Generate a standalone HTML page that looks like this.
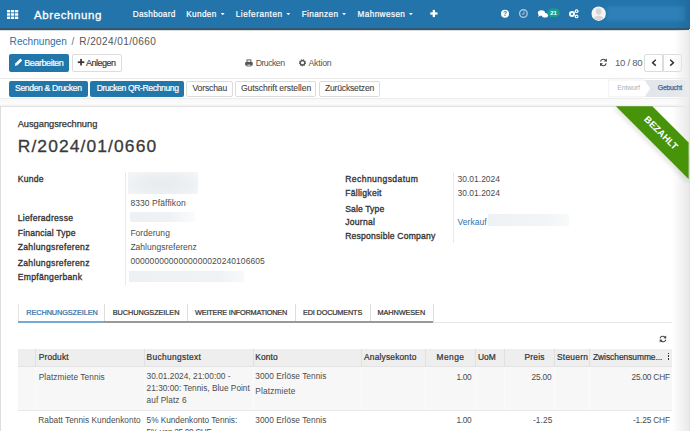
<!DOCTYPE html>
<html><head><meta charset="utf-8"><style>
html,body{margin:0;padding:0;width:690px;height:431px;overflow:hidden;background:#fff;}
body{position:relative;font-family:"Liberation Sans",sans-serif;}
.t{position:absolute;white-space:pre;line-height:normal;}
.a{position:absolute;box-sizing:border-box;}
</style></head><body>
<!-- navbar -->
<div class="a" style="left:0;top:0;width:690px;height:28.4px;background:#2374aa"></div>
<div class="a" style="left:0;top:28.4px;width:690px;height:1.2px;background:#34566e"></div>
<div class="a" style="left:0;top:29.6px;width:690px;height:0.8px;background:#d5dadd"></div>
<!-- grid icon -->
<svg class="a" style="left:7px;top:10px" width="12" height="9" viewBox="0 0 12 9">
<g fill="#fff"><rect x="0" y="0" width="3.2" height="2.4"/><rect x="4" y="0" width="3.2" height="2.4"/><rect x="8" y="0" width="3.2" height="2.4"/>
<rect x="0" y="3.3" width="3.2" height="2.4"/><rect x="4" y="3.3" width="3.2" height="2.4"/><rect x="8" y="3.3" width="3.2" height="2.4"/>
<rect x="0" y="6.6" width="3.2" height="2.4"/><rect x="4" y="6.6" width="3.2" height="2.4"/><rect x="8" y="6.6" width="3.2" height="2.4"/></g></svg>
<!-- carets -->
<svg class="a" style="left:0;top:0" width="690" height="28">
<g fill="#fff">
<polygon points="220.8,13 224.6,13 222.7,15.2"/>
<polygon points="286.4,13 290.2,13 288.3,15.2"/>
<polygon points="342.2,13 346,13 344.1,15.2"/>
<polygon points="409,13 412.8,13 410.9,15.2"/>
<!-- plus -->
<rect x="432.7" y="9.9" width="2.3" height="7.2"/><rect x="430.3" y="12.35" width="7.2" height="2.3"/>
<!-- help -->
<circle cx="505" cy="13.8" r="4"/>
</g>
<text x="505" y="16.3" font-family="Liberation Sans" font-weight="700" font-size="6.5" fill="#2373a9" text-anchor="middle">?</text>
<!-- clock -->
<circle cx="523.4" cy="13.5" r="3.8" fill="none" stroke="#a9c4da" stroke-width="1.4"/>
<path d="M524 11.3 V14.1 H521.9" fill="none" stroke="#a9c4da" stroke-width="1"/>
<!-- chat -->
<ellipse cx="541.5" cy="13" rx="3.6" ry="2.7" fill="#fff"/>
<ellipse cx="545" cy="15.2" rx="3.2" ry="2.3" fill="#fff"/>
<polygon points="539,14.5 538,17 541,15.2" fill="#fff"/>
<!-- badge -->
<rect x="547.2" y="8.4" width="12.7" height="8.6" rx="4.3" fill="#1a9d8a"/>
<text x="553.6" y="15.1" font-family="Liberation Sans" font-weight="700" font-size="6" fill="#fff" text-anchor="middle">21</text>
<!-- gears -->
<g fill="#fff">
<circle cx="572" cy="14" r="3"/><circle cx="576.6" cy="11.2" r="1.9"/><circle cx="576.6" cy="16.4" r="1.9"/>
</g>
<circle cx="572" cy="14" r="1.1" fill="#2374aa"/>
<circle cx="576.6" cy="11.2" r="0.75" fill="#2374aa"/><circle cx="576.6" cy="16.4" r="0.75" fill="#2374aa"/>
<!-- avatar -->
<circle cx="598.7" cy="13.7" r="7.2" fill="#f4f4f4"/>
<clipPath id="av"><circle cx="598.7" cy="13.7" r="6.4"/></clipPath>
<g clip-path="url(#av)" fill="#d6d6d6"><ellipse cx="598.7" cy="11.6" rx="2.9" ry="3.3"/><ellipse cx="598.7" cy="20.5" rx="5.5" ry="4.8"/></g>
</svg>
<!-- blurred name -->
<div class="a" style="left:607px;top:6.3px;width:78px;height:14.5px;background:#2e80b8;filter:blur(0.8px)"></div>
<div class="a" style="left:676px;top:0;width:14px;height:28.4px;background:linear-gradient(to right,rgba(20,70,110,0),rgba(20,70,110,0.18))"></div>

<!-- control panel -->
<div class="a" style="left:9px;top:54px;width:60.3px;height:18.3px;background:#2177aa;border-radius:2px"></div>
<div class="a" style="left:72px;top:54px;width:49.7px;height:18.3px;background:#fff;border:1px solid #dcdcdc;border-radius:2px"></div>
<svg class="a" style="left:0;top:40px" width="690" height="40">
<!-- pencil -->
<path d="M14.8 25.9 L15.5 23.3 L20.4 18.6 L22.2 20.4 L17.4 25.2 Z" fill="#fff"/>
<!-- plus -->
<rect x="80.2" y="18.9" width="1.7" height="6.6" fill="#333"/><rect x="77.8" y="21.35" width="6.5" height="1.7" fill="#333"/>
<!-- printer -->
<rect x="247" y="19.9" width="3.9" height="2.4" fill="none" stroke="#555" stroke-width="0.9"/>
<rect x="245.2" y="22" width="7.5" height="3.6" rx="0.7" fill="#555"/>
<rect x="247" y="24.2" width="3.9" height="1.8" fill="#fff" stroke="#555" stroke-width="0.8"/>
<!-- gear -->
<circle cx="302.5" cy="22.8" r="2.75" fill="none" stroke="#555" stroke-width="1.5" stroke-dasharray="1.2 0.65"/>
<circle cx="302.5" cy="22.8" r="2.2" fill="none" stroke="#555" stroke-width="1.3"/>
<!-- refresh -->
<g transform="translate(0,-1.3)">
<path d="M600.5 22.8 A3 3 0 0 1 606 22" fill="none" stroke="#444" stroke-width="1.05"/>
<path d="M606.2 24.6 A3 3 0 0 1 600.6 25.4" fill="none" stroke="#444" stroke-width="1.05"/>
<polygon points="606.8,19.8 606.8,23 603.8,22.6" fill="#444"/>
<polygon points="600,27.6 600,24.4 603,24.8" fill="#444"/>
</g>
<!-- chevrons -->
<path d="M655.8 19.8 L652.6 22.7 L655.8 25.6" fill="none" stroke="#333" stroke-width="1.5"/>
<path d="M670.2 19.8 L673.4 22.7 L670.2 25.6" fill="none" stroke="#333" stroke-width="1.5"/>
</svg>
<div class="a" style="left:644.4px;top:54px;width:19px;height:18.3px;border:1px solid #dcdcdc;border-radius:2px 0 0 2px"></div>
<div class="a" style="left:662.5px;top:54px;width:19px;height:18.3px;border:1px solid #dcdcdc;border-radius:0 2px 2px 0"></div>
<div class="a" style="left:0;top:77.5px;width:690px;height:1px;background:#eaeaea"></div>

<!-- statusbar -->
<div class="a" style="left:8.5px;top:80.5px;width:79.3px;height:16.2px;background:#2177aa;border-radius:2px"></div>
<div class="a" style="left:89.5px;top:80.5px;width:94.3px;height:16.2px;background:#2177aa;border-radius:2px"></div>
<div class="a" style="left:186.4px;top:80.5px;width:46.2px;height:16.2px;border:1px solid #dcdcdc;border-radius:2px"></div>
<div class="a" style="left:234.8px;top:80.5px;width:81.7px;height:16.2px;border:1px solid #dcdcdc;border-radius:2px"></div>
<div class="a" style="left:319px;top:80.5px;width:61px;height:16.2px;border:1px solid #dcdcdc;border-radius:2px"></div>
<svg class="a" style="left:600px;top:79px" width="90" height="20">
<path d="M8.6 1 H45 L50.3 9.4 L45 17.8 H8.6 Z" fill="#ffffff" stroke="#efefef" stroke-width="0.8"/>
<path d="M45 1 H88.5 V18 H45 L50.3 9.5 Z" fill="#e3e7eb"/>
</svg>
<div class="a" style="left:0;top:98.2px;width:690px;height:1px;background:#eeeeee"></div>
<div class="a" style="left:0;top:99.2px;width:690px;height:6.6px;background:linear-gradient(#f8f8f8,#fcfcfc 70%,#f0f0f0)"></div>
<!-- right strip -->
<div class="a" style="left:689px;top:29px;width:1px;height:402px;background:#e2e2e2"></div>

<!-- sheet -->
<div class="a" style="left:0;top:105.8px;width:689px;height:340px;background:#fff;border-left:1px solid #dedede;border-top:1px solid #e2e2e2"></div>
<div class="a" style="left:672px;top:106.5px;width:17px;height:330px;background:linear-gradient(to right,rgba(236,236,236,0),#e9e9e9)"></div>
<div class="a" style="left:674px;top:30px;width:15px;height:76.5px;background:linear-gradient(to right,rgba(236,236,236,0),#ebebeb);z-index:0"></div>
<!-- ribbon -->
<svg class="a" style="left:0;top:0" width="690" height="431">
<defs><filter id="rb" x="-20%" y="-20%" width="140%" height="140%"><feGaussianBlur stdDeviation="2"/></filter></defs>
<polygon points="613,108 640,108 688.6,156.6 688.6,184" fill="#000" opacity="0.10" filter="url(#rb)"/>
<polygon points="615.9,106.3 652.4,106.3 688.6,142.5 688.6,179" fill="#47930a"/>
<text x="0" y="0" transform="translate(661.3,132.6) rotate(45)" font-family="Liberation Sans" font-weight="700" font-size="9.4" fill="#fff" text-anchor="middle" dominant-baseline="central">BEZAHLT</text>
</svg>
<!-- form lines -->
<div class="a" style="left:125px;top:172px;width:1px;height:113px;background:#e9e9e9"></div>
<div class="a" style="left:452.8px;top:172px;width:1px;height:71px;background:#e9e9e9"></div>
<!-- blurred -->
<div class="a" style="left:128.1px;top:171.7px;width:70px;height:21.9px;background:radial-gradient(ellipse at 50% 55%,#e8ebee 0%,#edf0f2 55%,#f5f6f8 100%)"></div>
<div class="a" style="left:129.8px;top:212.1px;width:65.5px;height:10.4px;background:linear-gradient(to right,#eef1f4 0%,#eff2f5 60%,#fafbfc 100%)"></div>
<div class="a" style="left:129px;top:270.6px;width:114.5px;height:11.2px;background:linear-gradient(to right,#eef1f4 0%,#f0f3f6 80%,#f7f9fa 100%)"></div>
<div class="a" style="left:487.5px;top:213.7px;width:81px;height:12px;background:linear-gradient(to right,#eef2f5,#f2f5f8 70%,#f7f9fa)"></div>

<!-- tabs -->
<div class="a" style="left:104px;top:303.5px;width:1px;height:18px;background:#dddddd"></div>
<div class="a" style="left:186.5px;top:303.5px;width:1px;height:18px;background:#dddddd"></div>
<div class="a" style="left:294.5px;top:303.5px;width:1px;height:18px;background:#dddddd"></div>
<div class="a" style="left:370px;top:303.5px;width:1px;height:18px;background:#dddddd"></div>
<div class="a" style="left:433px;top:303.5px;width:1px;height:18px;background:#dddddd"></div>
<div class="a" style="left:18px;top:321.5px;width:654px;height:1px;background:#e6e6e6"></div>
<div class="a" style="left:18px;top:321px;width:86px;height:1.8px;background:#78a9d1"></div>
<div class="a" style="left:18px;top:303.8px;width:1px;height:17.5px;background:#e4e4e4"></div>
<div class="a" style="left:104px;top:321px;width:329px;height:1.8px;background:#999999"></div>

<!-- table -->
<svg class="a" style="left:658px;top:334px" width="10" height="10" viewBox="0 0 10 10">
<path d="M2 4.4 A3 3 0 0 1 7.4 3.6" fill="none" stroke="#444" stroke-width="1.1"/>
<path d="M7.9 5.6 A3 3 0 0 1 2.5 6.4" fill="none" stroke="#444" stroke-width="1.1"/>
<polygon points="8.2,1.6 8.2,4.6 5.4,4.2" fill="#444"/>
<polygon points="1.7,8.4 1.7,5.4 4.5,5.8" fill="#444"/>
</svg>
<div class="a" style="left:18px;top:348.5px;width:654px;height:18px;background:#eeeeee"></div>
<div class="a" style="left:18px;top:366.5px;width:654px;height:43.5px;background:#f7f7f7"></div>
<div class="a" style="left:35px;top:367px;width:1px;height:43px;background:#fbfbfb"></div>
<div class="a" style="left:144px;top:367px;width:1px;height:43px;background:#fbfbfb"></div>
<div class="a" style="left:252.5px;top:367px;width:1px;height:43px;background:#fbfbfb"></div>
<div class="a" style="left:360.5px;top:367px;width:1px;height:43px;background:#fbfbfb"></div>
<div class="a" style="left:425px;top:367px;width:1px;height:43px;background:#fbfbfb"></div>
<div class="a" style="left:474.8px;top:367px;width:1px;height:43px;background:#fbfbfb"></div>
<div class="a" style="left:504px;top:367px;width:1px;height:43px;background:#fbfbfb"></div>
<div class="a" style="left:554px;top:367px;width:1px;height:43px;background:#fbfbfb"></div>
<div class="a" style="left:589px;top:367px;width:1px;height:43px;background:#fbfbfb"></div>
<div class="a" style="left:18px;top:409.5px;width:654px;height:1px;background:#e8e8e8"></div>
<div class="a" style="left:18px;top:366px;width:654px;height:1px;background:#e4e4e4"></div>
<div class="a" style="left:35px;top:348.5px;width:1px;height:18px;background:#e0e0e0"></div>
<div class="a" style="left:144px;top:348.5px;width:1px;height:18px;background:#e0e0e0"></div>
<div class="a" style="left:252.5px;top:348.5px;width:1px;height:18px;background:#e0e0e0"></div>
<div class="a" style="left:360.5px;top:348.5px;width:1px;height:18px;background:#e0e0e0"></div>
<div class="a" style="left:425px;top:348.5px;width:1px;height:18px;background:#e0e0e0"></div>
<div class="a" style="left:474.8px;top:348.5px;width:1px;height:18px;background:#e0e0e0"></div>
<div class="a" style="left:504px;top:348.5px;width:1px;height:18px;background:#e0e0e0"></div>
<div class="a" style="left:554px;top:348.5px;width:1px;height:18px;background:#e0e0e0"></div>
<div class="a" style="left:589px;top:348.5px;width:1px;height:18px;background:#e0e0e0"></div>
<div class="a" style="left:667.5px;top:352.5px;width:1.8px;height:1.8px;background:#333"></div>
<div class="a" style="left:667.5px;top:355.3px;width:1.8px;height:1.8px;background:#333"></div>
<div class="a" style="left:667.5px;top:358.1px;width:1.8px;height:1.8px;background:#333"></div>

<div class="t" style="left:34.00px;top:9.00px;font-size:11.5px;color:#ffffff;letter-spacing:0.607px;-webkit-text-stroke:0.3px #ffffff;">Abrechnung</div>
<div class="t" style="left:132.80px;top:9.80px;font-size:8.2px;color:#ffffff;letter-spacing:0.304px;-webkit-text-stroke:0.2px #ffffff;">Dashboard</div>
<div class="t" style="left:186.30px;top:9.80px;font-size:8.2px;color:#ffffff;letter-spacing:0.344px;-webkit-text-stroke:0.2px #ffffff;">Kunden</div>
<div class="t" style="left:235.70px;top:9.80px;font-size:8.2px;color:#ffffff;letter-spacing:0.538px;-webkit-text-stroke:0.2px #ffffff;">Lieferanten</div>
<div class="t" style="left:301.70px;top:9.80px;font-size:8.2px;color:#ffffff;letter-spacing:0.377px;-webkit-text-stroke:0.2px #ffffff;">Finanzen</div>
<div class="t" style="left:357.50px;top:9.80px;font-size:8.2px;color:#ffffff;letter-spacing:0.405px;-webkit-text-stroke:0.2px #ffffff;">Mahnwesen</div>
<div class="t" style="left:9.60px;top:36.10px;font-size:10.1px;color:#3170a8;">Rechnungen</div>
<div class="t" style="left:71.40px;top:36.10px;font-size:10.1px;color:#6f6f6f;letter-spacing:0.587px;">/</div>
<div class="t" style="left:79.30px;top:36.10px;font-size:10.1px;color:#555555;letter-spacing:0.368px;">R/2024/01/0660</div>
<div class="t" style="left:24.30px;top:57.80px;font-size:9px;color:#ffffff;letter-spacing:-0.445px;-webkit-text-stroke:0.2px #ffffff;">Bearbeiten</div>
<div class="t" style="left:86.00px;top:57.80px;font-size:9px;color:#333333;letter-spacing:-0.490px;-webkit-text-stroke:0.15px #333333;">Anlegen</div>
<div class="t" style="left:255.70px;top:57.50px;font-size:8.8px;color:#555555;letter-spacing:-0.567px;">Drucken</div>
<div class="t" style="left:308.50px;top:57.50px;font-size:8.8px;color:#555555;letter-spacing:-0.259px;">Aktion</div>
<div class="t" style="left:615.00px;top:56.80px;font-size:9.6px;color:#606060;letter-spacing:-0.278px;">10 / 80</div>
<div class="t" style="left:15.00px;top:83.10px;font-size:8.6px;color:#ffffff;letter-spacing:-0.346px;-webkit-text-stroke:0.2px #ffffff;">Senden &amp; Drucken</div>
<div class="t" style="left:96.70px;top:83.10px;font-size:8.6px;color:#ffffff;letter-spacing:-0.391px;-webkit-text-stroke:0.2px #ffffff;">Drucken QR-Rechnung</div>
<div class="t" style="left:192.50px;top:83.10px;font-size:8.6px;color:#444444;letter-spacing:-0.155px;-webkit-text-stroke:0.1px #444444;">Vorschau</div>
<div class="t" style="left:241.00px;top:83.10px;font-size:8.6px;color:#444444;letter-spacing:-0.078px;-webkit-text-stroke:0.1px #444444;">Gutschrift erstellen</div>
<div class="t" style="left:325.00px;top:83.10px;font-size:8.6px;color:#444444;letter-spacing:-0.208px;-webkit-text-stroke:0.1px #444444;">Zurücksetzen</div>
<div class="t" style="left:617.30px;top:84.00px;font-size:6.9px;color:#aab1b8;letter-spacing:-0.139px;">Entwurf</div>
<div class="t" style="left:657.80px;top:84.00px;font-size:6.9px;color:#3d6897;letter-spacing:-0.280px;-webkit-text-stroke:0.25px #3d6897;">Gebucht</div>
<div class="t" style="left:17.70px;top:118.70px;font-size:9.3px;color:#333333;letter-spacing:-0.033px;-webkit-text-stroke:0.25px #333333;">Ausgangsrechnung</div>
<div class="t" style="left:17.70px;top:136.20px;font-size:17.4px;color:#3a3a3a;letter-spacing:1.130px;-webkit-text-stroke:0.3px #3a3a3a;">R/2024/01/0660</div>
<div class="t" style="left:17.70px;top:173.50px;font-size:8.6px;color:#333333;letter-spacing:0.248px;-webkit-text-stroke:0.32px #333333;">Kunde</div>
<div class="t" style="left:17.70px;top:212.90px;font-size:8.6px;color:#333333;letter-spacing:0.271px;-webkit-text-stroke:0.32px #333333;">Lieferadresse</div>
<div class="t" style="left:17.70px;top:227.70px;font-size:8.6px;color:#333333;letter-spacing:0.202px;-webkit-text-stroke:0.32px #333333;">Financial Type</div>
<div class="t" style="left:17.70px;top:242.40px;font-size:8.6px;color:#333333;letter-spacing:0.326px;-webkit-text-stroke:0.32px #333333;">Zahlungsreferenz</div>
<div class="t" style="left:17.70px;top:257.80px;font-size:8.6px;color:#333333;letter-spacing:0.326px;-webkit-text-stroke:0.32px #333333;">Zahlungsreferenz</div>
<div class="t" style="left:17.70px;top:271.60px;font-size:8.6px;color:#333333;letter-spacing:0.301px;-webkit-text-stroke:0.32px #333333;">Empfängerbank</div>
<div class="t" style="left:130.40px;top:197.60px;font-size:8.5px;color:#4c4c4c;letter-spacing:0.085px;">8330 Pfäffikon</div>
<div class="t" style="left:130.40px;top:228.00px;font-size:8.5px;color:#4c4c4c;letter-spacing:0.031px;">Forderung</div>
<div class="t" style="left:130.40px;top:242.00px;font-size:8.5px;color:#4c4c4c;letter-spacing:0.015px;">Zahlungsreferenz</div>
<div class="t" style="left:130.40px;top:255.60px;font-size:8.5px;color:#4c4c4c;letter-spacing:0.076px;">0000000000000000020240106605</div>
<div class="t" style="left:345.20px;top:174.00px;font-size:8.6px;color:#333333;letter-spacing:0.409px;-webkit-text-stroke:0.32px #333333;">Rechnungsdatum</div>
<div class="t" style="left:345.20px;top:187.80px;font-size:8.6px;color:#333333;letter-spacing:0.268px;-webkit-text-stroke:0.32px #333333;">Fälligkeit</div>
<div class="t" style="left:345.20px;top:204.00px;font-size:8.6px;color:#333333;letter-spacing:0.114px;-webkit-text-stroke:0.32px #333333;">Sale Type</div>
<div class="t" style="left:345.20px;top:216.80px;font-size:8.6px;color:#333333;letter-spacing:0.273px;-webkit-text-stroke:0.32px #333333;">Journal</div>
<div class="t" style="left:345.20px;top:231.30px;font-size:8.6px;color:#333333;letter-spacing:0.207px;-webkit-text-stroke:0.32px #333333;">Responsible Company</div>
<div class="t" style="left:457.50px;top:174.00px;font-size:8.5px;color:#4c4c4c;">30.01.2024</div>
<div class="t" style="left:457.50px;top:187.80px;font-size:8.5px;color:#4c4c4c;">30.01.2024</div>
<div class="t" style="left:457.50px;top:216.80px;font-size:8.5px;color:#3170a8;letter-spacing:0.039px;">Verkauf</div>
<div class="t" style="left:26.30px;top:307.80px;font-size:7.3px;color:#3170a8;letter-spacing:-0.085px;-webkit-text-stroke:0.22px #3170a8;">RECHNUNGSZEILEN</div>
<div class="t" style="left:112.80px;top:307.80px;font-size:7.3px;color:#333333;letter-spacing:-0.051px;-webkit-text-stroke:0.22px #333333;">BUCHUNGSZEILEN</div>
<div class="t" style="left:195.00px;top:307.80px;font-size:7.3px;color:#333333;letter-spacing:-0.183px;-webkit-text-stroke:0.22px #333333;">WEITERE INFORMATIONEN</div>
<div class="t" style="left:303.00px;top:307.80px;font-size:7.3px;color:#333333;letter-spacing:-0.163px;-webkit-text-stroke:0.22px #333333;">EDI DOCUMENTS</div>
<div class="t" style="left:377.50px;top:307.80px;font-size:7.3px;color:#333333;letter-spacing:-0.072px;-webkit-text-stroke:0.22px #333333;">MAHNWESEN</div>
<div class="t" style="left:38.70px;top:351.60px;font-size:8.4px;color:#333333;letter-spacing:0.175px;-webkit-text-stroke:0.22px #333333;">Produkt</div>
<div class="t" style="left:146.60px;top:351.60px;font-size:8.4px;color:#333333;letter-spacing:0.321px;-webkit-text-stroke:0.22px #333333;">Buchungstext</div>
<div class="t" style="left:255.30px;top:351.60px;font-size:8.4px;color:#333333;letter-spacing:0.142px;-webkit-text-stroke:0.22px #333333;">Konto</div>
<div class="t" style="left:364.00px;top:351.60px;font-size:8.4px;color:#333333;letter-spacing:0.192px;-webkit-text-stroke:0.22px #333333;">Analysekonto</div>
<div class="t" style="left:436.50px;top:351.60px;font-size:8.4px;color:#333333;letter-spacing:0.458px;-webkit-text-stroke:0.22px #333333;">Menge</div>
<div class="t" style="left:477.90px;top:351.60px;font-size:8.4px;color:#333333;letter-spacing:0.138px;-webkit-text-stroke:0.22px #333333;">UoM</div>
<div class="t" style="left:524.50px;top:351.60px;font-size:8.4px;color:#333333;letter-spacing:0.201px;-webkit-text-stroke:0.22px #333333;">Preis</div>
<div class="t" style="left:557.00px;top:351.60px;font-size:8.4px;color:#333333;letter-spacing:0.251px;-webkit-text-stroke:0.22px #333333;">Steuern</div>
<div class="t" style="left:593.00px;top:351.60px;font-size:8.4px;color:#333333;letter-spacing:-0.026px;-webkit-text-stroke:0.22px #333333;">Zwischensumme...</div>
<div class="t" style="left:38.70px;top:372.20px;font-size:8.3px;color:#4c4c4c;letter-spacing:0.072px;">Platzmiete Tennis</div>
<div class="t" style="left:146.60px;top:371.20px;font-size:8.3px;color:#4c4c4c;letter-spacing:0.023px;">30.01.2024, 21:00:00 -</div>
<div class="t" style="left:146.60px;top:382.50px;font-size:8.3px;color:#4c4c4c;">21:30:00: Tennis, Blue Point</div>
<div class="t" style="left:146.60px;top:395.20px;font-size:8.3px;color:#4c4c4c;letter-spacing:0.071px;">auf Platz 6</div>
<div class="t" style="left:255.30px;top:371.20px;font-size:8.3px;color:#4c4c4c;letter-spacing:0.038px;">3000 Erlöse Tennis</div>
<div class="t" style="left:255.30px;top:385.60px;font-size:8.3px;color:#4c4c4c;letter-spacing:0.137px;">Platzmiete</div>
<div class="t" style="left:456.50px;top:372.20px;font-size:8.3px;color:#4c4c4c;letter-spacing:-0.364px;">1.00</div>
<div class="t" style="left:531.50px;top:372.20px;font-size:8.3px;color:#4c4c4c;letter-spacing:-0.173px;">25.00</div>
<div class="t" style="left:631.50px;top:372.20px;font-size:8.3px;color:#4c4c4c;letter-spacing:-0.203px;">25.00 CHF</div>
<div class="t" style="left:38.30px;top:415.20px;font-size:8.3px;color:#4c4c4c;letter-spacing:0.020px;">Rabatt Tennis Kundenkonto</div>
<div class="t" style="left:146.60px;top:415.20px;font-size:8.3px;color:#4c4c4c;letter-spacing:-0.048px;">5% Kundenkonto Tennis:</div>
<div class="t" style="left:146.60px;top:426.50px;font-size:8.3px;color:#4c4c4c;letter-spacing:-0.344px;">5% von 25.00 CHF</div>
<div class="t" style="left:255.30px;top:415.20px;font-size:8.3px;color:#4c4c4c;letter-spacing:0.038px;">3000 Erlöse Tennis</div>
<div class="t" style="left:456.50px;top:415.20px;font-size:8.3px;color:#4c4c4c;letter-spacing:-0.364px;">1.00</div>
<div class="t" style="left:533.00px;top:415.20px;font-size:8.3px;color:#4c4c4c;letter-spacing:0.096px;">-1.25</div>
<div class="t" style="left:633.00px;top:415.20px;font-size:8.3px;color:#4c4c4c;letter-spacing:-0.165px;">-1.25 CHF</div>
</body></html>
